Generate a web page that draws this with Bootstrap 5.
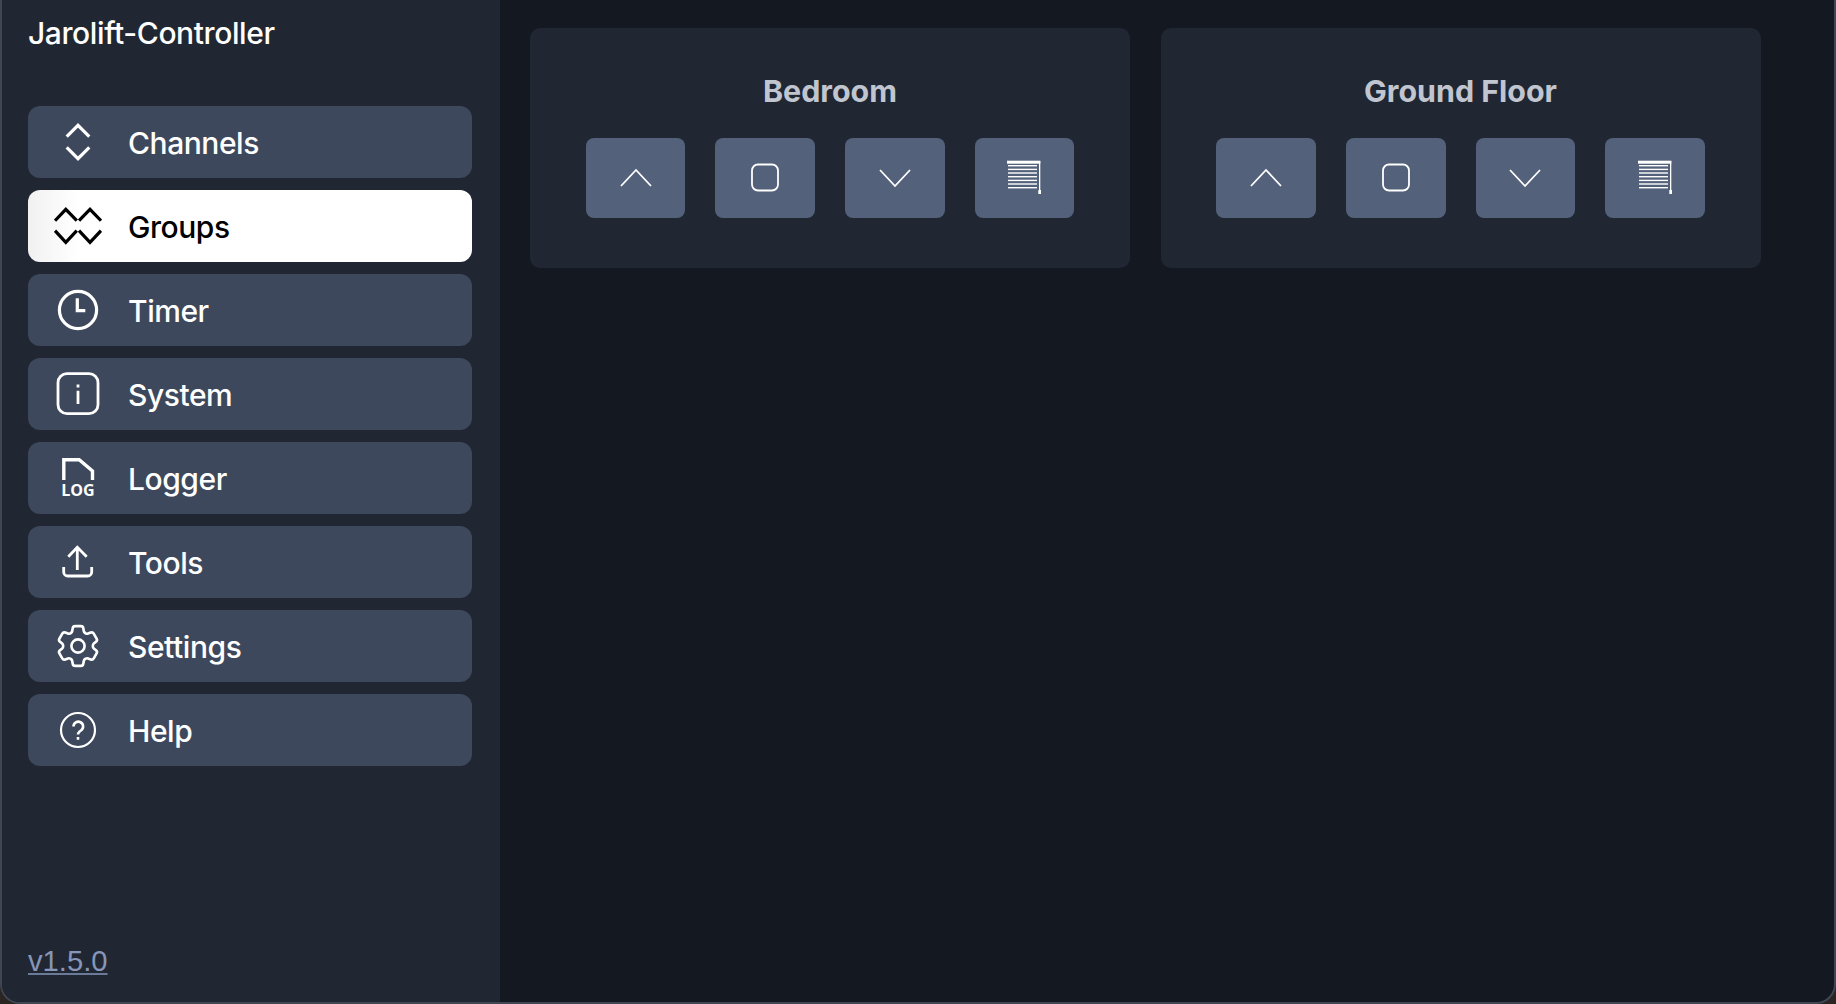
<!DOCTYPE html>
<html lang="en">
<head>
  <meta charset="UTF-8">
  <title>Jarolift-Controller</title>
  <meta name="viewport" content="width=device-width, initial-scale=1.0">
  <link rel="stylesheet" href="https://cdn.jsdelivr.net/npm/bootstrap@5.3.0/dist/css/bootstrap.min.css">
  <style>
    html, body { height: 100%; overflow: hidden; }
    body {
      background-color: #2a2422;
      font-family: 'Inter', sans-serif;
    }
    .app-frame {
      height: 100vh;
      border: 2px solid #3f4654;
      border-top: none;
      border-radius: 0 0 20px 20px;
      overflow: hidden;
      background-color: #141820;
    }
    .side-panel {
      width: 498px;
      flex: none;
      background-color: #202733;
      padding: 0 28px 0 26px;
    }
    .app-title {
      font-size: 30px;
      font-weight: 450;
      letter-spacing: -0.4px;
      line-height: 36px;
      color: #fff;
      padding-top: 15px;
      margin-bottom: 55px;
    }
    .menu-list { gap: 12.3px; }
    .menu-item {
      display: flex;
      align-items: center;
      gap: 26px;
      height: 71.7px;
      padding: 0 26px;
      border: none;
      border-radius: 12px;
      background-color: #3d485c;
      color: #fff;
      font-size: 30px;
      font-weight: 450;
      letter-spacing: -0.45px;
      text-align: left;
    }
    .menu-item:hover { background-color: #3d485c; color: #fff; }
    .menu-item.active, .menu-item.active:hover {
      background: linear-gradient(90deg, #f1f1f1 0, #fff 50px);
      color: #000;
    }
    .menu-label { padding-top: 3px; }
    .menu-icon { width: 48px; height: 48px; flex: none; }
    .version-wrap { padding-bottom: 24px; }
    .version-link {
      font-family: 'Liberation Sans', sans-serif;
      font-size: 29.2px;
      line-height: 34px;
      color: #8796b8;
      text-decoration-color: #6b7a99;
    }
    .main-panel { padding: 28px 0 0 30px; gap: 30.5px; }
    .group-card {
      width: 600px;
      height: 240px;
      background-color: #202733;
      border: none;
      border-radius: 10px;
      padding-top: 46px;
    }
    .group-title {
      font-weight: 700;
      font-size: 30.4px;
      line-height: 34px;
      color: #c1c5cf;
      margin-bottom: 30px;
    }
    .action-row { gap: 30px; }
    .action-btn {
      width: 99.6px;
      height: 80px;
      padding: 0;
      display: flex;
      align-items: center;
      justify-content: center;
      border: none;
      border-radius: 8px;
      background-color: #53617b;
    }
    .action-btn:hover { background-color: #53617b; }
    .menu-icon path, .menu-icon circle, .menu-icon rect { fill: none; stroke: currentColor; stroke-width: 2.8; }
    .menu-icon path.heavy { stroke-width: 3.2; }
    .btn-icon { width: 48px; height: 48px; }
    .btn-icon path, .btn-icon rect.outline { fill: none; stroke: #fff; stroke-width: 1.8; }
  </style>
</head>
<body>
<div class="app-frame d-flex">
  <div class="side-panel d-flex flex-column">
    <div class="app-title">Jarolift-Controller</div>
    <div class="menu-list d-flex flex-column">
      <button class="btn menu-item" type="button">
        <svg class="menu-icon" viewBox="0 0 48 48"><path class="heavy" d="M12.7 18.7 24 7.3l11.3 11.4M12.7 29.3 24 40.7l11.3-11.4"/></svg>
        <span class="menu-label">Channels</span>
      </button>
      <button class="btn menu-item active" type="button">
        <svg class="menu-icon" viewBox="0 0 48 48"><path class="heavy" d="M1 18.7 11.8 7.3l11 11.4M25 18.7 36 7.3l11 11.4M1 28.7l10.8 11.6 11-11.6M25 28.7 36 40.3l11-11.6"/></svg>
        <span class="menu-label">Groups</span>
      </button>
      <button class="btn menu-item" type="button">
        <svg class="menu-icon" viewBox="0 0 48 48"><circle style="stroke-width:3.2" cx="24" cy="24" r="18.6"/><path class="heavy" d="M23.3 12.3v12.4h8"/></svg>
        <span class="menu-label">Timer</span>
      </button>
      <button class="btn menu-item" type="button">
        <svg class="menu-icon" viewBox="0 0 48 48"><rect x="4" y="3.7" width="40" height="40" rx="9"/><path d="M24 20.7V34M24 14.6v2.8"/></svg>
        <span class="menu-label">System</span>
      </button>
      <button class="btn menu-item" type="button">
        <svg class="menu-icon" viewBox="0 0 48 48"><path style="stroke-width:3.4" d="M9.8 26V5.8h15.4L38.5 17v9"/><text x="24" y="41.7" text-anchor="middle" font-family="Open Sans, sans-serif" font-weight="700" font-size="16" fill="currentColor" letter-spacing="0" textLength="33.5" lengthAdjust="spacingAndGlyphs">LOG</text></svg>
        <span class="menu-label">Logger</span>
      </button>
      <button class="btn menu-item" type="button">
        <svg class="menu-icon" viewBox="0 0 48 48"><path d="M23.3 10v22M14.3 18.7l9-9.4 9.4 9.4M9.7 29v5a4 4 0 0 0 4 4h20a4 4 0 0 0 4-4v-5"/></svg>
        <span class="menu-label">Tools</span>
      </button>
      <button class="btn menu-item" type="button">
        <svg class="menu-icon" viewBox="1.1 1.1 21.8 21.8"><path style="stroke-width:1.2" d="M9.594 3.94c.09-.542.56-.94 1.11-.94h2.593c.55 0 1.02.398 1.11.94l.213 1.281c.063.374.313.686.645.87.074.04.147.083.22.127.325.196.72.257 1.075.124l1.217-.456a1.125 1.125 0 0 1 1.37.49l1.296 2.247a1.125 1.125 0 0 1-.26 1.431l-1.003.827c-.293.241-.438.613-.43.992a7.723 7.723 0 0 1 0 .255c-.008.378.137.75.43.991l1.004.827c.424.35.534.955.26 1.43l-1.298 2.247a1.125 1.125 0 0 1-1.369.491l-1.217-.456c-.355-.133-.75-.072-1.076.124a6.47 6.47 0 0 1-.22.128c-.331.183-.581.495-.644.869l-.213 1.281c-.09.543-.56.94-1.11.94h-2.594c-.55 0-1.019-.398-1.11-.94l-.213-1.281c-.062-.374-.312-.686-.644-.87a6.52 6.52 0 0 1-.22-.127c-.325-.196-.72-.257-1.076-.124l-1.217.456a1.125 1.125 0 0 1-1.369-.49l-1.297-2.247a1.125 1.125 0 0 1 .26-1.431l1.004-.827c.292-.24.437-.613.43-.991a6.932 6.932 0 0 1 0-.255c.007-.38-.138-.751-.43-.992l-1.004-.827a1.125 1.125 0 0 1-.26-1.43l1.297-2.247a1.125 1.125 0 0 1 1.37-.491l1.216.456c.356.133.751.072 1.076-.124.072-.044.146-.086.22-.128.332-.183.582-.495.644-.869l.214-1.28Z"/><circle style="stroke-width:1.2" cx="12" cy="12" r="3"/></svg>
        <span class="menu-label">Settings</span>
      </button>
      <button class="btn menu-item" type="button">
        <svg class="menu-icon" viewBox="0 0 48 48"><circle style="stroke-width:2.2" cx="24" cy="24" r="17"/><path style="stroke-width:2.6" d="M19.5 20.5a4.8 4.8 0 1 1 7.4 4c-1.9 1.2-2.9 2-2.9 4M24 31v2.8"/></svg>
        <span class="menu-label">Help</span>
      </button>
    </div>
    <div class="mt-auto version-wrap"><a class="version-link" href="#">v1.5.0</a></div>
  </div>
  <div class="main-panel d-flex flex-grow-1 align-items-start">
    <div class="card group-card">
      <div class="group-title text-center">Bedroom</div>
      <div class="action-row d-flex justify-content-center">
        <button class="btn action-btn" type="button"><svg class="btn-icon" viewBox="0 0 48 48"><path d="M9 32 24 16l15 16"/></svg></button>
        <button class="btn action-btn" type="button"><svg class="btn-icon" viewBox="0 0 48 48"><rect class="outline" x="11" y="10.5" width="26" height="26" rx="6"/></svg></button>
        <button class="btn action-btn" type="button"><svg class="btn-icon" viewBox="0 0 48 48"><path d="M9 16l15 16 15-16"/></svg></button>
        <button class="btn action-btn" type="button"><svg class="btn-icon" viewBox="0 0 48 48"><rect x="7" y="6.7" width="33.3" height="3" fill="#fff"/><rect x="39" y="7" width="1.3" height="30" fill="#fff"/><rect x="38.3" y="36" width="2.7" height="4" fill="#fff"/><g fill="#fff"><rect x="8" y="11" width="29" height="1.4"/><rect x="8" y="14.7" width="29" height="1.4"/><rect x="8" y="18.3" width="29" height="1.4"/><rect x="8" y="22" width="29" height="1.4"/><rect x="8" y="25.7" width="29" height="1.4"/><rect x="8" y="29.3" width="29" height="1.4"/><rect x="8" y="33" width="29" height="1.4"/></g></svg></button>
      </div>
    </div>
    <div class="card group-card">
      <div class="group-title text-center">Ground Floor</div>
      <div class="action-row d-flex justify-content-center">
        <button class="btn action-btn" type="button"><svg class="btn-icon" viewBox="0 0 48 48"><path d="M9 32 24 16l15 16"/></svg></button>
        <button class="btn action-btn" type="button"><svg class="btn-icon" viewBox="0 0 48 48"><rect class="outline" x="11" y="10.5" width="26" height="26" rx="6"/></svg></button>
        <button class="btn action-btn" type="button"><svg class="btn-icon" viewBox="0 0 48 48"><path d="M9 16l15 16 15-16"/></svg></button>
        <button class="btn action-btn" type="button"><svg class="btn-icon" viewBox="0 0 48 48"><rect x="7" y="6.7" width="33.3" height="3" fill="#fff"/><rect x="39" y="7" width="1.3" height="30" fill="#fff"/><rect x="38.3" y="36" width="2.7" height="4" fill="#fff"/><g fill="#fff"><rect x="8" y="11" width="29" height="1.4"/><rect x="8" y="14.7" width="29" height="1.4"/><rect x="8" y="18.3" width="29" height="1.4"/><rect x="8" y="22" width="29" height="1.4"/><rect x="8" y="25.7" width="29" height="1.4"/><rect x="8" y="29.3" width="29" height="1.4"/><rect x="8" y="33" width="29" height="1.4"/></g></svg></button>
      </div>
    </div>
  </div>
</div>
<script src="https://cdn.jsdelivr.net/npm/bootstrap@5.3.0/dist/js/bootstrap.bundle.min.js"></script>
</body>
</html>
